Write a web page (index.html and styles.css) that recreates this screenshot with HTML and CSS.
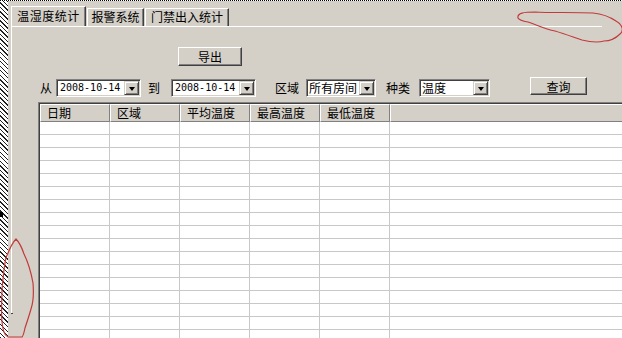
FILE: index.html
```html
<!DOCTYPE html>
<html lang="zh-CN">
<head>
    <meta charset="UTF-8">
    <title>温湿度统计</title>
    <link rel="stylesheet" href="styles.css">
</head>
<body>
    <div class="top-line"></div>
    <div class="window">
        <div class="hatch"><span class="grip"></span></div>

        <div class="main">
            <!-- tab strip -->
            <div class="tabs">
                <div class="tab active">温湿度统计</div>
                <div class="tab tab-alarm">报警系统</div>
                <div class="tab tab-door">门禁出入统计</div>
            </div>

            <div class="page">
                <div class="export-row">
                    <button class="btn btn-export">导出</button>
                </div>

                <div class="filter-row">
                    <span class="lbl lbl-from">从</span>
                    <div class="combo combo-from"><span class="combo-text date">2008-10-14</span><span class="drop"></span></div>
                    <span class="lbl lbl-to">到</span>
                    <div class="combo combo-to"><span class="combo-text date">2008-10-14</span><span class="drop"></span></div>
                    <span class="lbl lbl-area">区域</span>
                    <div class="combo combo-area"><span class="combo-text">所有房间</span><span class="drop"></span></div>
                    <span class="lbl lbl-kind">种类</span>
                    <div class="combo combo-kind"><span class="combo-text">温度</span><span class="drop"></span></div>
                    <button class="btn btn-query">查询</button>
                </div>

                <div class="grid">
                    <div class="grid-head">
                        <span class="hc">日期</span>
                        <span class="hc">区域</span>
                        <span class="hc">平均温度</span>
                        <span class="hc">最高温度</span>
                        <span class="hc">最低温度</span>
                        <span class="hc hc-fill"></span>
                    </div>
                    <div id="grid-body"></div>
                </div>
            </div>
        </div>
    </div>

    <!-- red pen marks drawn over the screenshot -->
    <svg class="marks" width="622" height="338" viewBox="0 0 622 338">
        <path d="M518,18 C517,13 524,12 535,12 C550,13 575,12 593,13 C603,14 610,17 616,21 C623,25 624,31 620,34 C615,39 610,41 604,41 C597,43 590,42 582,40 C573,37 565,34 555,31 C545,29 537,25 528,22 C522,21 519,20 518,18 Z"/>
        <path d="M16,239 C20,243 22,248 24,254 C28,262 31,272 33,283 C34,295 33,303 31,309 C29,316 27,322 25,328 C24,333 23,336 22,337 L8,337 C4,335 3,330 2,322 C1,312 2,300 2,290 C3,278 4,266 6,258 C9,250 12,243 16,239 Z"/>
    </svg>

    <script>
        // fill the empty grid body rows
        const body = document.getElementById('grid-body');
        for (let i = 0; i < 17; i++) {
            const row = document.createElement('div');
            row.className = 'gr';
            for (let c = 0; c < 5; c++) {
                const cell = document.createElement('span');
                cell.className = 'gc';
                row.appendChild(cell);
            }
            body.appendChild(row);
        }
    </script>
</body>
</html>
```

FILE: styles.css
```css
html {
    overflow: hidden;
}

body {
    margin: 0;
    width: 622px;
    height: 338px;
    overflow: hidden;
    position: relative;
    background-color: #d4d0c8;
    font-family: "Noto Sans CJK SC", "DejaVu Sans", sans-serif;
    font-size: 12px;
    color: #000;
}

.top-line {
    height: 1px;
    background: repeating-linear-gradient(90deg, #000 0 1px, #fff 1px 2px);
}

.window {
    display: flex;
    height: 337px;
    overflow: hidden;
}

.hatch {
    width: 8px;
    position: relative;
    background: repeating-linear-gradient(45deg, #222 0 1px, #fff 1px 3.2px);
}

.grip {
    position: absolute;
    left: 0;
    top: 211px;
    width: 3px;
    height: 5px;
    background: #000;
}

.main {
    margin-left: 3px;
    flex: 1;
}

/* tabs */
.tabs {
    display: flex;
    align-items: flex-end;
    height: 25px;
}

.tab {
    box-sizing: border-box;
    height: 18px;
    line-height: 16px;
    text-align: center;
    background: #d4d0c8;
    border-top: 1px solid #fff;
    border-left: 1px solid #fff;
    border-right: 1px solid #404040;
    box-shadow: inset -1px 0 #808080;
}

.tab.active {
    position: relative;
    width: 75px;
    height: 21px;
    line-height: 18px;
    margin-bottom: -1px;
    letter-spacing: 0.5px;
}

.tab-alarm {
    width: 57px;
    margin-left: 1px;
}

.tab-door {
    width: 84px;
    margin-left: 1px;
}

.page {
    position: relative;
    width: 590px;
    height: 286px;
    border-top: 1px solid #fff;
    border-left: 1px solid #fff;
}

.page::after {
    content: "";
    position: absolute;
    left: -1px;
    bottom: -1px;
    width: 2px;
    height: 1px;
    background: #404040;
}

/* buttons */
.btn {
    box-sizing: border-box;
    padding: 0;
    font-family: inherit;
    font-size: 12px;
    line-height: 15px;
    color: #000;
    background: #d4d0c8;
    border: 1px solid;
    border-color: #fff #404040 #404040 #fff;
    box-shadow: inset -1px -1px #808080;
}

.export-row {
    padding: 20px 0 0 166px;
}

.btn-export {
    display: block;
    width: 64px;
    height: 19px;
}

.filter-row {
    display: flex;
    align-items: flex-start;
    height: 20px;
    margin-top: 11px;
}

.lbl {
    margin-top: 2px;
    line-height: 18px;
}

.lbl-from { margin-left: 28px; }
.lbl-to { margin-left: 7px; }
.lbl-area { margin-left: 19px; }
.lbl-kind { margin-left: 10px; }

.combo {
    box-sizing: border-box;
    display: flex;
    height: 18px;
    margin-top: 2px;
    background: #fff;
    border: 1px solid;
    border-color: #808080 #fff #fff #808080;
    box-shadow: inset 1px 1px #404040, inset -1px -1px #d4d0c8;
    padding: 1px;
}

.combo-text {
    flex: 1;
    padding-left: 1px;
    line-height: 14px;
    white-space: nowrap;
}

.combo-text.date {
    padding-left: 2px;
    font-family: "DejaVu Sans Mono", "Liberation Mono", monospace;
    font-size: 10px;
}

.combo-from { width: 85px; margin-left: 4px; }
.combo-to { width: 85px; margin-left: 11px; }
.combo-area { width: 70px; margin-left: 7px; }
.combo-kind { width: 71px; margin-left: 9px; }

.drop {
    box-sizing: border-box;
    width: 15px;
    height: 14px;
    display: flex;
    align-items: center;
    justify-content: center;
    background: #d4d0c8;
    border: 1px solid;
    border-color: #d4d0c8 #404040 #404040 #d4d0c8;
    box-shadow: inset 1px 1px #fff, inset -1px -1px #808080;
}

.drop::before {
    content: "";
    border-left: 3px solid transparent;
    border-right: 3px solid transparent;
    border-top: 4px solid #000;
    margin-top: 1px;
}

.btn-query {
    width: 57px;
    height: 18px;
    margin-left: 40px;
}

/* data grid */
.grid {
    width: 600px;
    height: 236px;
    overflow: hidden;
    box-sizing: border-box;
    margin: 5px 0 0 26px;
    background: #fff;
    border-top: 1px solid #808080;
    border-left: 1px solid #808080;
    box-shadow: inset 1px 1px #404040;
    padding: 1px 0 0 1px;
}

.grid-head {
    display: flex;
    height: 18px;
}

.hc {
    box-sizing: border-box;
    width: 70px;
    height: 18px;
    padding-left: 6px;
    line-height: 16px;
    background: #d4d0c8;
    border-top: 1px solid #fff;
    border-left: 1px solid #fff;
    border-right: 1px solid #808080;
    border-bottom: 1px solid #808080;
}

.hc-fill {
    flex: 1;
}

.gr {
    display: flex;
    box-sizing: border-box;
    height: 13px;
    border-bottom: 1px solid #c8c8c8;
}

.gc {
    box-sizing: border-box;
    width: 70px;
    border-right: 1px solid #c8c8c8;
}

.marks {
    position: absolute;
    left: 0;
    top: 0;
    pointer-events: none;
}

.marks path {
    fill: none;
    stroke: #c23a3a;
    stroke-width: 1.2;
}
```
